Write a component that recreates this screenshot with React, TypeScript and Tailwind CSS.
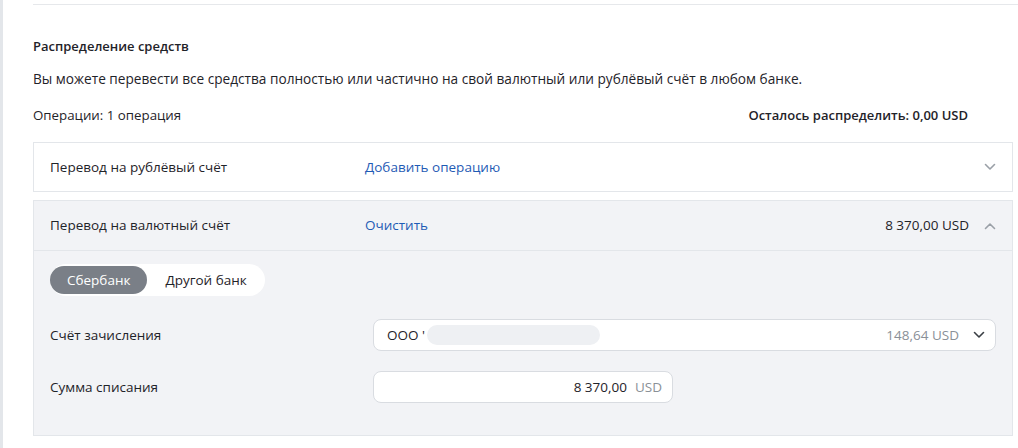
import React from 'react';

const Chevron = ({ up = false, className = '' }: { up?: boolean; className?: string }) => (
  <svg width="12" height="8" viewBox="0 0 12 8" className={className} fill="none">
    <path d={up ? 'M1.5 6.5L6 2l4.5 4.5' : 'M1.5 1.5L6 6l4.5-4.5'} stroke="currentColor" strokeWidth="1.6" strokeLinecap="round" strokeLinejoin="round" />
  </svg>
);

const App = () => {
  return (
    <div className="w-[1018px] h-[448px] bg-white flex text-[#1f2329] overflow-hidden" style={{ fontFamily: '"Open Sans", "Noto Sans", sans-serif' }}>
      <div className="w-[3px] bg-[#e3e6ea]" />
      <div className="flex-1 pl-[30px] pr-[5px]">
        <div className="h-[5px] border-b border-[#e6e8eb] mr-[-5px]" />
        <h2 className="mt-[31px] text-[13px] font-semibold leading-[20px]">Распределение средств</h2>
        <p className="mt-[13px] text-[13.65px] leading-[20px]">
          Вы можете перевести все средства полностью или частично на свой валютный или рублёвый счёт в любом банке.
        </p>
        <div className="mt-[16px] flex justify-between items-center text-[13.3px] leading-[20px] pr-[45px]">
          <span>Операции: 1 операция</span>
          <span className="font-semibold text-[13px]">Осталось распределить: 0,00 USD</span>
        </div>

        <div className="mt-[17px] h-[50px] border border-[#e3e6ea] bg-white flex items-center pl-[16px] pr-[16px] text-[13.5px]">
          <span className="w-[315px]">Перевод на рублёвый счёт</span>
          <span className="text-[#1f5bb5]">Добавить операцию</span>
          <Chevron className="ml-auto text-[#9aa0a7]" />
        </div>

        <div className="mt-[8px] border border-[#e3e6ea] bg-[#f2f3f6] text-[13.5px]">
          <div className="h-[50px] flex items-center pl-[16px] pr-[16px] border-b border-[#e3e6ea]">
            <span className="w-[315px]">Перевод на валютный счёт</span>
            <span className="text-[#1f5bb5]">Очистить</span>
            <span className="ml-auto mr-[15px]">8 370,00 USD</span>
            <Chevron up className="text-[#9aa0a7]" />
          </div>
          <div className="pl-[16px] pr-[16px] pt-[13px] pb-[32px]">
            <div className="inline-flex items-center bg-white rounded-full h-[32px] pr-[18px]">
              <span className="h-[28px] ml-0 px-[17px] flex items-center rounded-full bg-[#7a7f87] text-white">Сбербанк</span>
              <span className="ml-[18px]">Другой банк</span>
            </div>
            <div className="mt-[23px] flex items-center">
              <span className="w-[323px]">Счёт зачисления</span>
              <div className="flex-1 h-[32px] bg-white border border-[#d9dce1] rounded-[8px] flex items-center pl-[13px] pr-[10px]">
                <span>ООО '</span>
                <span className="ml-[2px] h-[20px] w-[173px] rounded-full bg-[#eef0f3]" />
                <span className="ml-auto text-[#8a9097]">148,64 USD</span>
                <Chevron className="ml-[14px] text-[#3a3f45]" />
              </div>
            </div>
            <div className="mt-[20px] flex items-center">
              <span className="w-[323px]">Сумма списания</span>
              <div className="w-[300px] h-[32px] bg-white border border-[#d9dce1] rounded-[8px] flex items-center justify-end pr-[10px]">
                <span>8 370,00</span>
                <span className="ml-[8px] text-[#8a9097]">USD</span>
              </div>
            </div>
          </div>
        </div>
      </div>
    </div>
  );
};

export default App;
